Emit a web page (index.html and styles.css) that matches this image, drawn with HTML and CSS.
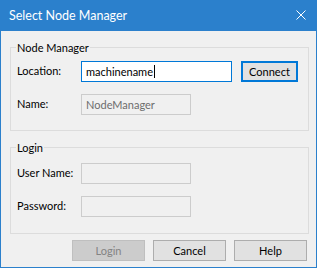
FILE: index.html
```html
<!DOCTYPE html>
<html>
<head>
<meta charset="utf-8">
<link rel="stylesheet" href="styles.css">
</head>
<body>
<div class="window">
  <div class="titlebar">
    <span class="title">Select Node Manager</span>
    <svg class="close" width="10" height="10" viewBox="0 0 10 10"><path d="M0.5 0.5 L9.5 9.5 M9.5 0.5 L0.5 9.5" stroke="#fff" stroke-width="1" fill="none"/></svg>
  </div>
  <div class="client">
    <fieldset class="group group-nm">
      <legend>Node Manager</legend>
      <div class="row">
        <span class="label">Location:</span>
        <div class="tb tb-focus tb-wide">machinename<span class="caret"></span></div>
        <div class="btn btn-default">Connect</div>
      </div>
      <div class="row row-2">
        <span class="label">Name:</span>
        <div class="tb tb-disabled">NodeManager</div>
      </div>
    </fieldset>
    <fieldset class="group group-login">
      <legend>Login</legend>
      <div class="row">
        <span class="label">User Name:</span>
        <div class="tb tb-disabled"></div>
      </div>
      <div class="row row-2">
        <span class="label">Password:</span>
        <div class="tb tb-disabled"></div>
      </div>
    </fieldset>
    <div class="buttons">
      <div class="btn btn-disabled">Login</div>
      <div class="btn">Cancel</div>
      <div class="btn">Help</div>
    </div>
  </div>
</div>
</body>
</html>
```
FILE: styles.css
```css
* { box-sizing: border-box; }
html, body { margin: 0; padding: 0; background: #f0f0f0; }
body {
  font-family: Lato, "Open Sans", sans-serif;
  font-size: 11px;
  color: #000;
}
.window {
  width: 317px;
  height: 268px;
  display: flex;
  flex-direction: column;
}
.titlebar {
  height: 31px;
  flex: none;
  background: #2b80cc;
  display: flex;
  align-items: center;
  padding: 0 11px 0 9px;
}
.title {
  flex: 1;
  color: #fff;
  font-size: 12.5px;
  line-height: 31px;
}
.close { display: block; margin-top: -1px; }
.client {
  flex: 1;
  border: 1px solid #2b80cc;
  border-top: none;
  background: #f0f0f0;
  display: flex;
  flex-direction: column;
  align-items: flex-start;
  padding: 9px 0 0 9px;
}
.group {
  margin: 0;
  width: 299px;
  border: 1px solid #dcdcdc;
  padding: 6px 0 15px 6px;
  min-width: 0;
}
.group legend {
  padding: 0 1px;
  margin-left: -1px;
  line-height: 15px;
  font-size: 11px;
}
.group-login {
  margin-top: 9px;
  padding: 8px 0 16px 6px;
}
.row {
  display: flex;
  align-items: center;
  height: 21px;
}
.row-2 { margin-top: 12px; }
.label {
  width: 64px;
  flex: none;
  margin-top: -2px;
}
.tb {
  width: 110px;
  height: 21px;
  border: 1px solid #cccccc;
  background: #f0f0f0;
  padding: 0 0 0 4px;
  line-height: 19px;
  white-space: nowrap;
  display: flex;
  align-items: center;
}
.tb-wide { width: 151px; }
.tb-focus {
  border-color: #0078d7;
  background: #fff;
  color: #000;
}
.tb-disabled { color: #6d6d6d; }
.caret {
  display: inline-block;
  width: 1px;
  height: 13px;
  background: #000;
  margin-left: 1px;
}
.btn {
  width: 73px;
  height: 21px;
  border: 1px solid #adadad;
  background: #e1e1e1;
  display: flex;
  align-items: center;
  justify-content: center;
  line-height: 19px;
  color: #000;
}
.btn-default {
  width: 57px;
  margin-left: 9px;
  border: 2px solid #0078d7;
}
.btn-disabled {
  background: #cccccc;
  border-color: #bfbfbf;
  color: #838383;
}
.buttons {
  margin-top: 6px;
  margin-left: 62px;
  display: flex;
  gap: 8px;
}
```
